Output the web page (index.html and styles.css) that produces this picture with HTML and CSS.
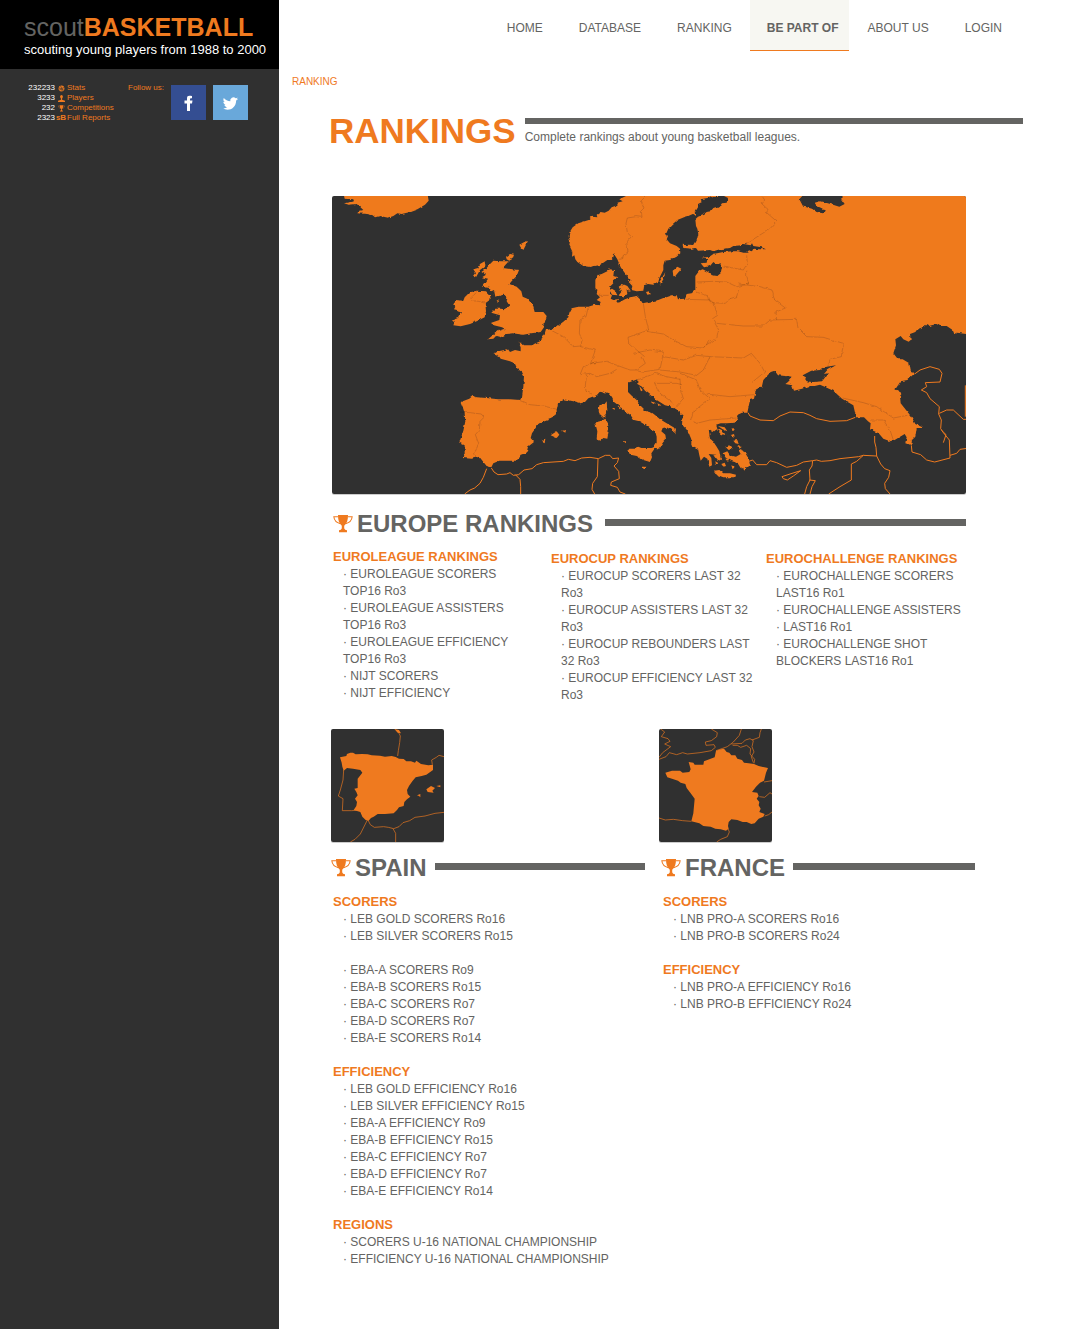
FILE: index.html
```html
<!DOCTYPE html>
<html lang="en">
<head>
<meta charset="utf-8">
<meta name="viewport" content="width=device-width, initial-scale=1">
<title>Rankings - scoutBASKETBALL</title>
<link rel="stylesheet" href="styles.css">
</head>
<body>
<svg class="defs" aria-hidden="true">
  <symbol id="trophy" viewBox="0 0 57 52">
    <path d="M14 0H43C43 14 40 25 32 31V38C33 42 36 43 40 44V50H17V44C21 43 24 42 25 38V31C17 25 14 14 14 0Z"/>
    <path d="M14 5H2C3 15 8 22 21 25M43 5H55C54 15 49 22 36 25" fill="none" stroke="currentColor" stroke-width="3"/>
  </symbol>
  <filter id="ragged" x="-2%" y="-2%" width="104%" height="104%">
    <feTurbulence type="fractalNoise" baseFrequency="0.07" numOctaves="2" seed="4" result="noise"/>
    <feDisplacementMap in="SourceGraphic" in2="noise" scale="9" xChannelSelector="R" yChannelSelector="G"/>
  </filter>
</svg>
<div class="page">
  <aside class="sidebar">
    <a class="brand" href="#">
      <span class="brand-name"><span class="brand-scout">scout</span><b>BASKETBALL</b></span>
      <span class="brand-tag">scouting young players from 1988 to 2000</span>
    </a>
    <div class="sidebar-info">
      <ul class="stats">
        <li><span class="count">232233</span><svg class="stat-icon" viewBox="0 0 12 12"><circle cx="6" cy="6" r="5"/><path d="M1 5Q6 8 11 4M4 1Q8 6 7 11M2 9Q6 5 10 9" class="seam"/></svg>Stats</li>
        <li><span class="count">3233</span><svg class="stat-icon" viewBox="0 0 12 12"><path d="M6 0C9 0 9 4 7 6V8L12 10V12H0V10L5 8V6C3 4 3 0 6 0Z"/></svg>Players</li>
        <li><span class="count">232</span><svg class="stat-icon"><use href="#trophy"/></svg>Competitions</li>
        <li><span class="count">2323</span><b class="stat-mark">sB</b>Full Reports</li>
      </ul>
      <span class="follow">Follow us:</span>
      <a class="social facebook" href="#" aria-label="Facebook"><svg viewBox="0 0 35 35"><path d="M16 26V18.500H13.500V15.500H16V13.500C16 10.500 17.500 10.500 21 11V13.200C19 13 19 13.500 19 15.500H21.500L21 18.500H19V26Z"/></svg></a>
      <a class="social twitter" href="#" aria-label="Twitter"><svg viewBox="0 0 24 24"><path d="M20 8.100c-.6.300-1.200.4-1.900.5.700-.4 1.200-1 1.400-1.800-.6.400-1.300.6-2.100.8a3.300 3.300 0 0 0-5.600 3C9.100 10.500 6.600 9.200 5 7.200c-.9 1.500-.4 3.400 1 4.400-.5 0-1-.2-1.500-.4 0 1.600 1.100 2.900 2.600 3.200-.5.100-1 .2-1.500.1.400 1.300 1.600 2.200 3.100 2.300A6.600 6.600 0 0 1 3.900 18.100c5.800 3.700 14 .2 14-8.200.7-.5 1.600-1 2.100-1.800z"/></svg></a>
    </div>
  </aside>

  <main class="main">
    <nav class="nav">
      <a href="#">HOME</a><a href="#">DATABASE</a><a href="#">RANKING</a><a class="active" href="#">BE PART OF</a><a href="#">ABOUT US</a><a href="#">LOGIN</a>
    </nav>
    <a class="crumb" href="#">RANKING</a>

    <header class="title">
      <h1>RANKINGS</h1>
      <div class="intro"><p>Complete rankings about young basketball leagues.</p></div>
    </header>

    <section class="europe">
      <svg class="map" viewBox="6 18 1902 894" role="img" aria-label="Map of Europe">
        <rect class="sea" x="6" y="18" width="1902" height="894"/>
        <g filter="url(#ragged)">
        <!-- mainland -->
        <path class="land" d="M888 18L868 28 878 34 862 38 866 44 845 52 836 62 824 68 812 66 800 74 802 82 786 80 776 90 745 100 728 112 718 128 716 140 720 152 718 166 727 185 726 200 733 196 736 208 742 216 760 228 780 231 810 225 832 210 842 210 850 202 852 192 862 208 872 232 885 250 902 270 896 276 907 288 905 300 920 304 940 302 942 286 954 282 970 284 985 276 988 264 1000 240 1000 226 1004 212 1020 210 1040 200 1051 190 1050 176 1040 168 1020 160 1010 148 1014 138 1008 132 1015 116 1025 105 1042 90 1062 82 1075 78 1088 72 1098 80 1094 68 1104 52 1104 42 1116 36 1112 28 1132 24 1150 18H1182L1194 24 1190 38 1176 40 1170 48 1150 54 1142 64 1130 66 1120 74 1104 80 1096 88 1098 108 1102 116 1105 132 1100 152 1092 166 1080 164 1068 166 1058 164 1060 174 1085 176 1098 174 1104 182 1140 180 1150 184 1170 178 1200 174 1210 168 1235 166 1240 162 1262 166 1266 160 1270 168 1295 172 1308 178 1290 178 1270 176 1266 184 1250 180 1256 188 1240 188 1225 184 1210 184 1180 186 1150 192 1138 200 1114 204 1132 208 1130 218 1112 220 1122 232 1140 228 1150 216 1158 222 1172 220 1176 230 1172 250 1162 258 1146 256 1134 246 1118 238 1108 242 1096 258 1096 300 1085 310 1070 312 1064 326 1044 328 1040 316 1024 316 1000 324 985 330 960 335 938 340 930 328 920 318 905 320 885 328 866 338 862 334 868 326 850 330 842 326 846 316 838 310 840 300 838 292 850 280 846 272 862 262 850 258 852 240 840 238 832 244 815 252 802 256 796 270 796 295 803 300 800 312 810 322 800 330 812 336 808 346 794 344 775 350 745 350 725 355 718 368 715 382 700 395 680 410 662 418 648 420 644 434 636 440 634 452 612 462 608 466 582 466 574 458 566 458 572 472 572 484 555 480 540 486 534 478 505 484 490 492 508 500 512 506 540 514 554 520 562 536 576 546 582 558 580 590 576 620 570 630 540 628 505 628 470 624 440 622 428 618 418 626 392 636 398 650 404 670 406 694 400 722 394 740 388 758 404 766 404 790 401 804 425 806 448 800 462 818 470 828 484 832 490 820 508 812 540 812 560 812 572 794 590 788 594 770 612 756 602 744 606 730 625 702 640 692 662 684 680 674 680 660 684 640 700 628 730 634 752 640 765 636 775 625 800 616 812 602 835 610 846 624 852 636 868 648 886 664 902 676 912 690 928 694 955 710 962 718 976 726 980 740 980 758 968 776 984 778 992 768 1000 756 1008 748 1006 734 994 724 998 714 1010 712 1020 718 1036 730 1038 716 1010 700 990 688 976 676 966 668 944 662 926 644 920 630 906 618 894 606 894 578 906 574 922 568 922 582 936 590 945 602 962 616 980 630 1005 646 1024 650 1045 664 1058 674 1056 704 1068 716 1076 728 1084 748 1084 766 1104 776 1108 796 1112 812 1122 800 1132 806 1138 830 1146 826 1144 804 1136 792 1158 794 1172 806 1168 784 1160 770 1148 752 1140 746 1136 716 1150 726 1162 716 1158 704 1172 700 1190 700 1214 698 1224 686 1220 676 1236 668 1252 668 1260 630 1272 626 1276 608 1276 600 1296 588 1300 570 1322 546 1334 542 1344 556 1388 560 1374 576 1366 582 1386 586 1392 602 1416 596 1438 588 1454 588 1470 584 1484 590 1510 602 1536 626 1570 646 1576 672 1578 682 1602 682 1614 694 1622 700 1620 718 1638 726 1646 730 1660 746 1680 754 1694 750 1724 732 1730 742 1726 758 1744 766 1746 750 1756 740 1760 714 1782 714 1756 702 1744 680 1728 660 1712 640 1710 618 1716 610 1696 598 1712 574 1732 570 1754 550 1742 542 1738 520 1718 508 1704 508 1690 490 1698 466 1696 448 1712 438 1720 448 1736 455 1742 450 1740 432 1756 426 1762 418 1782 410 1790 402 1796 408 1820 402 1830 408 1850 408 1868 420 1874 434 1882 428 1908 432H1930V0H888Z"/>
        <!-- Iceland, Britain, Ireland and the islands -->
        <path class="land" d="M40 8H292L296 32 285 44 262 58 240 66 215 72 202 70 190 78 175 83 150 78 135 82 128 76 112 72 82 70 86 64 100 60 90 50 80 42 56 44 42 40 72 34 70 28 44 26ZM490 212L512 214 536 214 518 234 545 238 567 240 560 258 546 272 538 282 560 290 574 304 578 320 592 326 608 344 614 366 640 366 650 378 644 398 636 404 642 412 632 426 604 430 580 434 548 430 530 432 512 442 498 438 490 446 474 448 502 424 524 416 516 412 486 404 484 398 508 390 510 376 484 368 496 356 512 356 524 358 538 346 530 334 532 322 522 314 496 320 492 300 484 304 478 294 456 290 466 278 474 266 456 262 468 254 454 246 468 236 478 224ZM404 322L420 306 442 302 468 304 480 316 482 328 466 340 468 364 464 382 440 394 420 402 392 409 370 406 374 396 362 392 384 384 396 364 372 358 376 350 370 344 376 330 400 332ZM464 214L466 228 450 240 438 262 432 258 438 250 430 238 444 234 450 222ZM590 152L588 164 580 180 572 172 568 164ZM528 200L540 192 552 194 548 206 538 212 530 208ZM500 332L508 328 502 336 498 338ZM808 646L824 642 830 634 832 662 824 678 822 686 810 676 806 660ZM800 696L816 692 826 686 834 700 836 722 832 746 820 744 812 752 800 748 802 724 796 700ZM898 776L918 776 925 770 934 774 964 774 978 770 964 790 966 802 960 816 940 810 920 798 902 794 892 784ZM1152 842L1168 840 1180 850 1200 850 1218 854 1216 862 1180 862 1160 854ZM634 750L646 746 644 760 636 756ZM662 736L680 724 688 734 680 744ZM696 722L708 720 706 728ZM838 300L846 296 858 304 862 316 846 314ZM866 290L878 282 892 288 902 302 890 300 892 312 878 324 866 316 874 306ZM1028 242L1042 230 1054 236 1044 248 1034 260 1030 258ZM988 276L996 264 1006 246 1000 268 990 284ZM948 306L958 304 962 312 952 314ZM938 830L944 830 948 838 940 836ZM1066 166L1076 164 1086 174 1066 174Z"/>
        <path class="land" d="M1178 790l14-6 8 12 18 4 14-8-8-14 20 8 12 20 4 20-14 12-14-4-10-16-16-4-18-10zM1204 716l8-2-4 10zM1210 752l12-2 4 12-10-2zM1156 814l10 6-8 4zM1174 822l10-4 4 10-8 2zM1204 826l10 4-6 8zM1236 832l12-4-4 14zM1186 770l12-4 10 10-12 4zM1222 764l14 6-8 6zM1200 736l12-4 2 8zM1186 806l12 2-4 8zM1216 812l8 4-8 6zM1150 796l14-2 10 14-10 6zM1158 716l16 8 12 12-14-4zM1164 708l20 4 8 12-14-6zM880 754h8v6zM846 654h8v6zM866 650l8 4-6 4zM938 578l12 12-4 6-8-8zM950 588h8v8zM928 588l10 12-6 2zM960 634l16 4-6 4zM982 640l12 6-8 2z"/>
        <!-- inland seas and lakes -->
        <path class="sea" d="M1418 556L1444 542 1472 540 1490 530 1518 526 1492 540 1482 552 1494 550 1482 566 1476 574 1450 576 1430 574ZM1408 28L1426 8H1536L1534 28 1544 42 1528 50 1502 42 1470 34 1454 38 1460 48 1474 54 1488 62 1478 70 1460 66 1446 56 1430 52 1420 50ZM1190 736l14-6-2 18-12 2z"/>
        <!-- inner borders -->
        <path class="border" d="M948 18L934 32 942 54 934 62 936 82 918 80 892 84 888 100 892 128 904 140 890 156 894 186 880 196 878 206 866 208M1296 18L1304 30 1296 42 1314 58 1310 68 1340 94 1320 116 1260 154 1246 162M1180 228L1210 234 1240 240 1252 220 1250 196M1100 276L1150 274 1190 276 1220 290 1256 282 1250 260 1250 240M1098 306L1136 318 1140 338 1186 340 1200 326 1220 320 1226 298M1066 328L1140 330 1152 340 1162 376 1148 386 1166 420 1160 446 1120 470M1160 400L1240 408 1300 408 1320 390 1400 388 1404 414 1430 440 1480 442 1540 460 1534 500 1500 508 1494 528M1226 282L1290 290 1326 300 1334 330 1366 354 1338 366 1340 390M940 340L946 380 956 420 950 424 1000 432 1030 450 1070 470 1120 474 1140 450M950 422L894 442 896 458 920 480 944 500M775 350L768 380 750 390 748 430 756 450 752 470 796 480 782 520 830 514 850 522 900 540 918 540 946 520 936 500M662 420L700 440 730 470 752 468M800 515L760 530 750 554 780 550 800 560 840 550 860 538M770 554L766 586 768 604 786 612M390 666L420 668 454 672 462 682 450 694 448 720 436 734 446 760 434 790 438 802M570 630L600 644 640 648 682 658M920 542L936 546 990 538 996 510 1000 486 960 480 910 490M922 570L950 560 974 550 1010 560 1050 568M990 540L1050 546 1100 556 1120 540 1140 500 1100 496 1060 510 1000 500M1050 566L1052 600 1060 626 1036 652M974 580L1040 580 1056 584M974 580L990 610 1030 640M1050 550L1100 570 1110 600 1140 626 1090 664M1130 612L1200 620 1272 614M1140 500L1240 504 1264 490 1290 520 1304 546 1270 574M1090 664L1082 690 1100 700 1140 690 1220 684M1538 624L1600 638 1640 650 1690 684 1732 676M1620 690L1660 690 1680 720 1690 750M420 326L432 314 444 304M424 332L446 334 466 340M806 316H836"/>
        </g>
        <!-- outlines of the neighbouring countries -->
        <path class="coast" d="M470 836L460 862 450 880 434 894 420 900 404 912M484 834L492 846 504 854 530 852 540 848 550 856 566 854 582 840 606 836 620 824 640 818 700 814 715 808 735 812 755 804 780 802 805 806 826 796 840 796 848 806 866 804 862 818 852 828 866 844 868 866 844 876 842 886 862 892 870 906 886 912M556 854L570 868 572 890 572 912M804 806L802 860 788 880 786 898 794 912M1254 668L1260 678 1290 690 1330 692 1350 678 1380 666 1420 668 1440 676 1460 686 1500 694 1550 692 1576 682M1240 800L1256 814 1268 810 1280 824 1310 824 1320 812 1340 818 1370 832 1400 826 1420 816 1448 812 1446 828 1438 840 1440 870 1430 890 1424 912M1448 812L1460 810 1474 814 1500 812 1530 806 1586 800 1600 796 1640 798 1638 772 1634 756 1634 738M1600 796L1580 814 1564 822 1564 870 1530 890 1496 912M1640 798L1652 822 1664 836 1680 842 1676 862 1664 880 1666 896 1680 912M1356 860L1380 852 1412 842 1390 858 1372 870 1360 866ZM1438 870L1456 872 1446 890 1440 912M1744 766L1746 786 1772 794 1790 810 1814 816 1860 804 1858 750 1840 728 1832 716 1834 690 1826 672 1828 650 1800 626 1790 608 1774 600 1790 590 1786 578 1830 576 1836 550 1828 538 1800 530 1770 540 1754 552M1828 670L1850 660 1870 660 1900 688H1920M1860 796L1880 790 1890 778 1920 774M1906 586V680M1834 720l14 14-8 24" />
      </svg>

      <h2 class="heading"><svg class="trophy"><use href="#trophy"/></svg>EUROPE RANKINGS</h2>
      <div class="leagues">
        <div class="group">
          <h3>EUROLEAGUE RANKINGS</h3>
          <ul class="list">
            <li><a href="#">EUROLEAGUE SCORERS TOP16 Ro3</a></li>
            <li><a href="#">EUROLEAGUE ASSISTERS TOP16 Ro3</a></li>
            <li><a href="#">EUROLEAGUE EFFICIENCY TOP16 Ro3</a></li>
            <li><a href="#">NIJT SCORERS</a></li>
            <li><a href="#">NIJT EFFICIENCY</a></li>
          </ul>
        </div>
        <div class="group">
          <h3>EUROCUP RANKINGS</h3>
          <ul class="list">
            <li><a href="#">EUROCUP SCORERS LAST 32 Ro3</a></li>
            <li><a href="#">EUROCUP ASSISTERS LAST 32 Ro3</a></li>
            <li><a href="#">EUROCUP REBOUNDERS LAST 32 Ro3</a></li>
            <li><a href="#">EUROCUP EFFICIENCY LAST 32 Ro3</a></li>
          </ul>
        </div>
        <div class="group">
          <h3>EUROCHALLENGE RANKINGS</h3>
          <ul class="list">
            <li><a href="#">EUROCHALLENGE SCORERS LAST16 Ro1</a></li>
            <li><a href="#">EUROCHALLENGE ASSISTERS</a></li>
            <li><a href="#">LAST16 Ro1</a></li>
            <li><a href="#">EUROCHALLENGE SHOT BLOCKERS LAST16 Ro1</a></li>
          </ul>
        </div>
      </div>
    </section>

    <div class="countries">
      <section class="country">
        <svg class="thumb" viewBox="18 27 339 339" role="img" aria-label="Map of Spain">
          <rect class="sea" x="18" y="27" width="339" height="339"/>
          <path class="land" d="M45 112L64 108 66 102 76 98 84 98 92 103 112 102 128 103 140 106 165 107 180 110 200 108 212 111 222 116 236 117 244 124 258 124 270 128 274 122 288 132 310 136 324 134 324 150 304 164 290 168 272 172 262 184 252 198 246 210 248 222 256 230 246 238 238 246 236 258 222 262 216 270 206 280 180 282 158 282 146 290 138 294 130 303 122 300 112 290 106 276 86 270 94 258 96 246 90 236 98 226 94 216 88 206 98 204 98 176 112 158 106 150 84 146 66 144 56 152 52 140 50 128ZM304 208L318 198 330 204 322 212 326 218 308 216ZM334 198L346 196 346 202ZM276 226L286 222 286 232 282 228ZM208 27L222 30 228 40 218 38Z"/>
          <path class="coast thin" d="M220 36L226 48 224 68 220 92 218 108M322 134L320 120 334 112 342 106 357 110M56 150L54 180 46 210 40 228 54 236 52 272 80 272 106 270M126 302L118 318 106 342 90 358 76 366M130 302L136 314 148 322 176 320 190 322 206 326 222 320 234 308 254 302 270 292 300 288 330 280 357 277M204 326L212 340 212 366"/>
        </svg>
        <h2 class="heading"><svg class="trophy"><use href="#trophy"/></svg>SPAIN</h2>
        <div class="group">
          <h3>SCORERS</h3>
          <ul class="list">
            <li><a href="#">LEB GOLD SCORERS Ro16</a></li>
            <li><a href="#">LEB SILVER SCORERS Ro15</a></li>
          </ul>
          <ul class="list">
            <li><a href="#">EBA-A SCORERS Ro9</a></li>
            <li><a href="#">EBA-B SCORERS Ro15</a></li>
            <li><a href="#">EBA-C SCORERS Ro7</a></li>
            <li><a href="#">EBA-D SCORERS Ro7</a></li>
            <li><a href="#">EBA-E SCORERS Ro14</a></li>
          </ul>
          <h3>EFFICIENCY</h3>
          <ul class="list">
            <li><a href="#">LEB GOLD EFFICIENCY Ro16</a></li>
            <li><a href="#">LEB SILVER EFFICIENCY Ro15</a></li>
            <li><a href="#">EBA-A EFFICIENCY Ro9</a></li>
            <li><a href="#">EBA-B EFFICIENCY Ro15</a></li>
            <li><a href="#">EBA-C EFFICIENCY Ro7</a></li>
            <li><a href="#">EBA-D EFFICIENCY Ro7</a></li>
            <li><a href="#">EBA-E EFFICIENCY Ro14</a></li>
          </ul>
          <h3>REGIONS</h3>
          <ul class="list">
            <li><a href="#">SCORERS U-16 NATIONAL CHAMPIONSHIP</a></li>
            <li><a href="#">EFFICIENCY U-16 NATIONAL CHAMPIONSHIP</a></li>
          </ul>
        </div>
      </section>

      <section class="country">
        <svg class="thumb" viewBox="27 27 339 339" role="img" aria-label="Map of France">
          <rect class="sea" x="27" y="27" width="339" height="339"/>
          <path class="land" d="M198 92L212 88 222 86 230 96 238 98 244 106 256 106 262 116 276 120 282 128 296 130 312 132 326 138 354 144 348 158 342 182 330 188 318 200 306 216 322 218 326 228 320 236 328 246 326 256 332 266 328 276 344 282 340 290 326 296 314 310 304 312 290 306 278 306 262 300 244 298 236 306 234 318 236 326 228 332 212 328 196 326 182 320 160 318 148 310 124 304 130 280 134 236 122 220 110 204 106 192 92 188 84 182 66 176 52 172 46 158 66 152 90 152 98 158 118 156 122 148 116 126 130 128 134 134 160 134 162 124 178 118 194 112Z"/>
          <path class="coast thin" d="M32 27L44 36 34 50 54 56 60 64 44 72 62 80 38 98 27 112M27 118L48 110 58 98 80 104 98 98 112 102 150 98 184 92 196 82 192 74 168 76 166 66 184 62 200 50 202 38 184 27M198 92L232 80 250 66 268 46 274 27M248 76L262 76 272 82 290 76 302 86 300 102 314 118 312 130M244 72L276 70 286 60 300 56 310 62 306 80 312 96 304 110 310 128M306 60L328 52 330 38 334 27M342 186L366 182M328 230L344 232 360 218 366 222M344 288L356 284 366 276M27 294L46 300 70 298 98 302 124 304M234 326L238 336 232 350 212 358 200 366"/>
        </svg>
        <h2 class="heading"><svg class="trophy"><use href="#trophy"/></svg>FRANCE</h2>
        <div class="group">
          <h3>SCORERS</h3>
          <ul class="list">
            <li><a href="#">LNB PRO-A SCORERS Ro16</a></li>
            <li><a href="#">LNB PRO-B SCORERS Ro24</a></li>
          </ul>
          <h3>EFFICIENCY</h3>
          <ul class="list">
            <li><a href="#">LNB PRO-A EFFICIENCY Ro16</a></li>
            <li><a href="#">LNB PRO-B EFFICIENCY Ro24</a></li>
          </ul>
        </div>
      </section>
    </div>
  </main>
</div>
</body>
</html>
```
FILE: styles.css
```css
:root {
  --orange: #ef7a1f;
  --grey: #646462;
  --dark: #303030;
}

* {
  box-sizing: border-box;
}

body {
  margin: 0;
  background: #fff;
  color: var(--grey);
  font: 12px/17px "Liberation Sans", Arial, sans-serif;
}

h1, h2, h3, p, ul {
  margin: 0;
  padding: 0;
}

ul {
  list-style: none;
}

a {
  color: inherit;
  text-decoration: none;
}

svg {
  display: block;
  fill: currentColor;
}

.defs {
  position: absolute;
  width: 0;
  height: 0;
}

.page {
  display: flex;
  min-height: 100vh;
}

/* Sidebar */
.sidebar {
  flex: 0 0 279px;
  background: var(--dark);
}

.brand {
  display: block;
  padding: 12px 0 11px 24px;
  background: #000;
  color: #fff;
}

.brand-name {
  display: block;
  color: var(--orange);
  font-size: 25px;
  line-height: 30px;
}

.brand-scout {
  color: var(--grey);
}

.brand-tag {
  display: block;
  font-size: 13px;
  line-height: 16px;
  white-space: nowrap;
}

.sidebar-info {
  display: flex;
  align-items: flex-start;
  padding: 14px 0 0 27px;
  color: var(--orange);
  font-size: 8px;
  line-height: 10px;
}

.stats {
  flex: 0 0 101px;
}

.stats li {
  display: grid;
  grid-template-columns: 28px 12px 1fr;
  align-items: center;
}

.count {
  color: #fff;
  text-align: right;
}

.stat-icon {
  width: 7px;
  height: 7px;
  justify-self: center;
}

.seam {
  fill: none;
  stroke: var(--dark);
}

.stat-mark {
  text-align: center;
}

.follow {
  width: 43px;
}

.social {
  width: 35px;
  height: 35px;
  margin: 2px 7px 0 0;
  color: #fff;
}

.facebook {
  background: #344e92;
}

.twitter {
  padding: 6px;
  background: #69a8da;
}

/* Main column */
.main {
  flex: 1;
  min-width: 0;
}

.nav {
  display: flex;
  justify-content: flex-end;
  padding-right: 55px;
}

.nav a {
  padding: 20px 18px 13px;
  border-bottom: 1px solid transparent;
}

.nav .active {
  margin-right: 1px;
  padding-right: 10px;
  padding-left: 17px;
  background: #f7f7f2;
  border-color: var(--orange);
  font-weight: bold;
}

.crumb {
  display: block;
  margin: 22px 0 0 13px;
  color: var(--orange);
  font-size: 10px;
}

.title {
  display: flex;
  gap: 9px;
  margin: 21px 52px 0 50px;
}

h1 {
  color: var(--orange);
  font-size: 35px;
  line-height: 40px;
}

.intro {
  flex: 1;
  margin-top: 7px;
  padding-top: 5px;
  border-top: 6px solid var(--grey);
}

.europe {
  margin: 45px 109px 0 53px;
}

.map, .thumb {
  border-radius: 2px;
  box-shadow: 0 1px 0 #ccc;
}

.map {
  width: 100%;
}

.sea {
  fill: var(--dark);
}

.land {
  fill: var(--orange);
}

.coast {
  fill: none;
  stroke: var(--orange);
  stroke-width: 3;
}

.thin {
  stroke-width: 2;
}

.border {
  fill: none;
  stroke: #000;
  stroke-opacity: .22;
  stroke-width: 2;
}

.heading {
  display: flex;
  align-items: center;
  font-size: 24px;
  line-height: 28px;
}

.heading::after {
  content: "";
  flex: 1;
  height: 7px;
  margin: 0 0 4px 8px;
  background: var(--grey);
}

.trophy {
  width: 20px;
  height: 18px;
  margin-right: 4px;
  color: var(--orange);
}

.europe .heading {
  margin-top: 16px;
  padding-left: 1px;
}

.europe .heading::after {
  margin-left: 12px;
}

.leagues {
  display: grid;
  grid-template-columns: 218fr 215fr 200fr;
  margin-top: 11px;
  padding-left: 1px;
}

.leagues .group {
  padding-right: 4px;
}

.leagues .group:first-child {
  padding-right: 24px;
}

.leagues .group + .group {
  padding-top: 2px;
}

h3 {
  padding-bottom: 2px;
  color: var(--orange);
  font-size: 13px;
  line-height: 15px;
}

.list {
  padding-left: 10px;
}

.list li::before {
  content: "· ";
}

.list + h3, .list + .list {
  margin-top: 17px;
}

.countries {
  display: grid;
  grid-template-columns: 314fr 316fr;
  gap: 14px;
  margin: 25px 100px 57px 52px;
}

.thumb {
  width: 113px;
  height: 113px;
}

.country .heading {
  margin: 12px 0;
}

.country .group {
  padding-left: 2px;
}

.country + .country .heading {
  padding-left: 2px;
}

.country + .country .group {
  padding-left: 4px;
}
```
